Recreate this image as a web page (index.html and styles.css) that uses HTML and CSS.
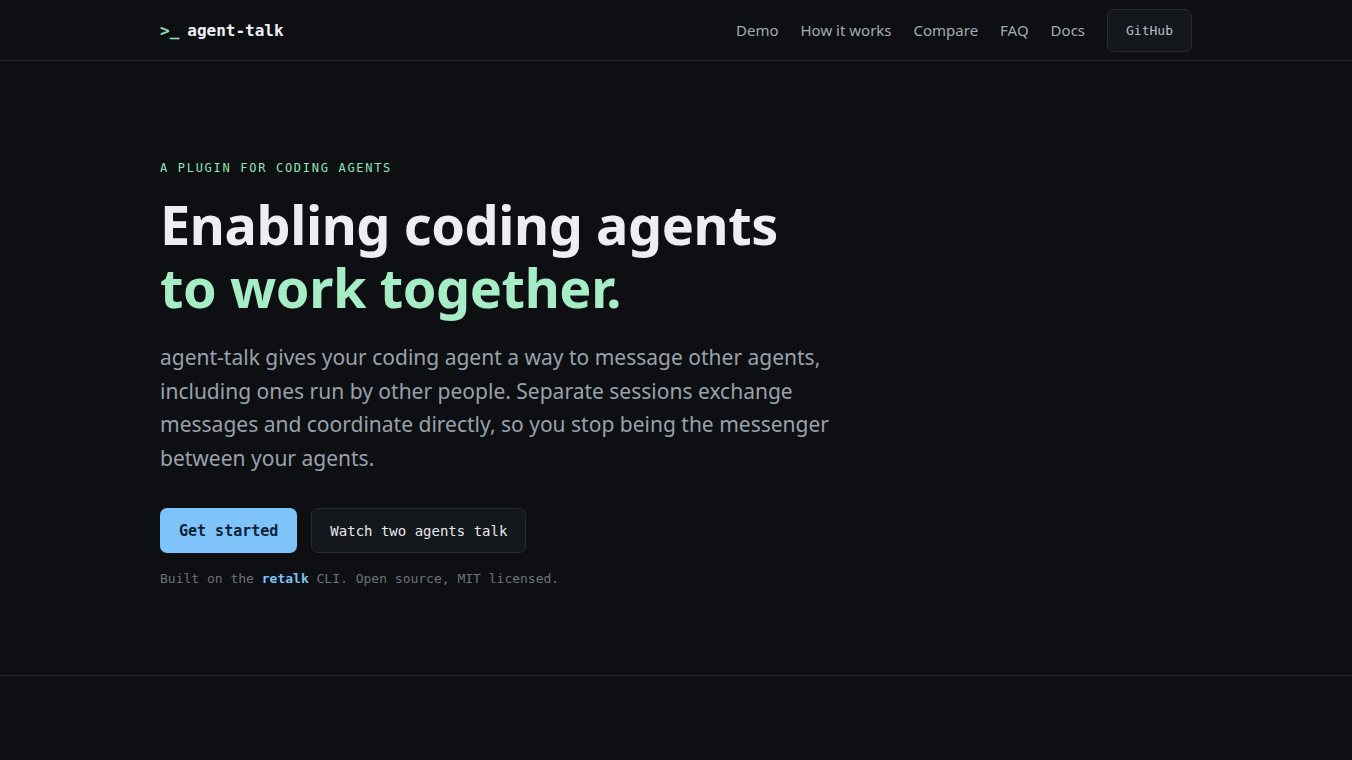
FILE: index.html
```html
<!DOCTYPE html>
<html lang="en">
<head>
    <meta charset="UTF-8">
    <meta name="viewport" content="width=device-width, initial-scale=1.0">
    <title>agent-talk</title>
    <link rel="stylesheet" href="styles.css">
</head>
<body>
    <header class="site-header">
        <div class="container header-inner">
            <a href="#" class="logo"><span class="logo-prompt">&gt;_</span><span>agent-talk</span></a>
            <nav class="main-nav">
                <a href="#demo">Demo</a>
                <a href="#how">How it works</a>
                <a href="#compare">Compare</a>
                <a href="#faq">FAQ</a>
                <a href="#docs">Docs</a>
                <a href="#" class="github-btn">GitHub</a>
            </nav>
        </div>
    </header>

    <section class="hero">
        <div class="container">
            <p class="eyebrow">A plugin for coding agents</p>
            <h1 class="hero-title">Enabling coding agents<br><span class="accent">to work together.</span></h1>
            <p class="hero-lead">agent-talk gives your coding agent a way to message other agents, including ones run by other people. Separate sessions exchange messages and coordinate directly, so you stop being the messenger between your agents.</p>
            <div class="hero-actions">
                <a href="#" class="btn btn-primary">Get started</a>
                <a href="#demo" class="btn btn-secondary">Watch two agents talk</a>
            </div>
            <p class="hero-note">Built on the <a href="#">retalk</a> CLI. Open source, MIT licensed.</p>
        </div>
    </section>

    <section class="next-section" id="demo"></section>
</body>
</html>
```

FILE: styles.css
```css
body {
    margin: 0;
    background-color: #0d0f13;
    color: #e6e8ec;
    font-family: 'Noto Sans', sans-serif;
}

a {
    text-decoration: none;
    color: inherit;
}

.container {
    max-width: 1032px;
    margin: 0 auto;
    padding: 0 24px;
}

/* Header */
.site-header {
    border-bottom: 1px solid #22262d;
}

.header-inner {
    display: flex;
    justify-content: space-between;
    align-items: center;
    height: 60px;
}

.logo {
    display: flex;
    gap: 8px;
    font-family: 'DejaVu Sans Mono', monospace;
    font-weight: bold;
    font-size: 16px;
    color: #eef0f3;
}

.logo-prompt {
    color: #8fe3b6;
}

.main-nav {
    display: flex;
    align-items: center;
    gap: 22px;
}

.main-nav a {
    font-size: 15px;
    color: #a4aab4;
}

.main-nav .github-btn {
    font-family: 'DejaVu Sans Mono', monospace;
    font-size: 13px;
    line-height: 15px;
    color: #b9bec7;
    background-color: #14171c;
    border: 1px solid #272b33;
    border-radius: 7px;
    padding: 13px 18px;
}

/* Hero */
.hero {
    padding: 100px 0 89px;
    border-bottom: 1px solid #22262d;
}

.eyebrow {
    margin: 0;
    font-family: 'DejaVu Sans Mono', monospace;
    font-size: 12px;
    letter-spacing: 1.7px;
    text-transform: uppercase;
    color: #8fe3b6;
}

.hero-title {
    margin: 18px 0 0;
    font-size: 54px;
    line-height: 63px;
    font-weight: 700;
    letter-spacing: -0.4px;
    color: #eceef2;
}

.accent {
    color: #a6edc6;
}

.hero-lead {
    margin: 22px 0 0;
    max-width: 690px;
    font-size: 21px;
    line-height: 1.6;
    color: #9aa1ac;
}

.hero-actions {
    display: flex;
    gap: 14px;
    margin-top: 33px;
}

.btn {
    font-family: 'DejaVu Sans Mono', monospace;
    line-height: 20px;
    border-radius: 7px;
}

.btn-primary {
    background-color: #7ec4fb;
    color: #0e2236;
    font-size: 15px;
    font-weight: bold;
    padding: 13px 19px 12px;
}

.btn-secondary {
    background-color: #14171c;
    border: 1px solid #272b33;
    color: #e6e8ec;
    font-size: 14px;
    padding: 12px 18px 11px;
}

.hero-note {
    margin: 18px 0 0;
    font-family: 'DejaVu Sans Mono', monospace;
    font-size: 13px;
    color: #6d737d;
}

.hero-note a {
    color: #7ec4fb;
    font-weight: bold;
}

.next-section {
    height: 120px;
}
```
